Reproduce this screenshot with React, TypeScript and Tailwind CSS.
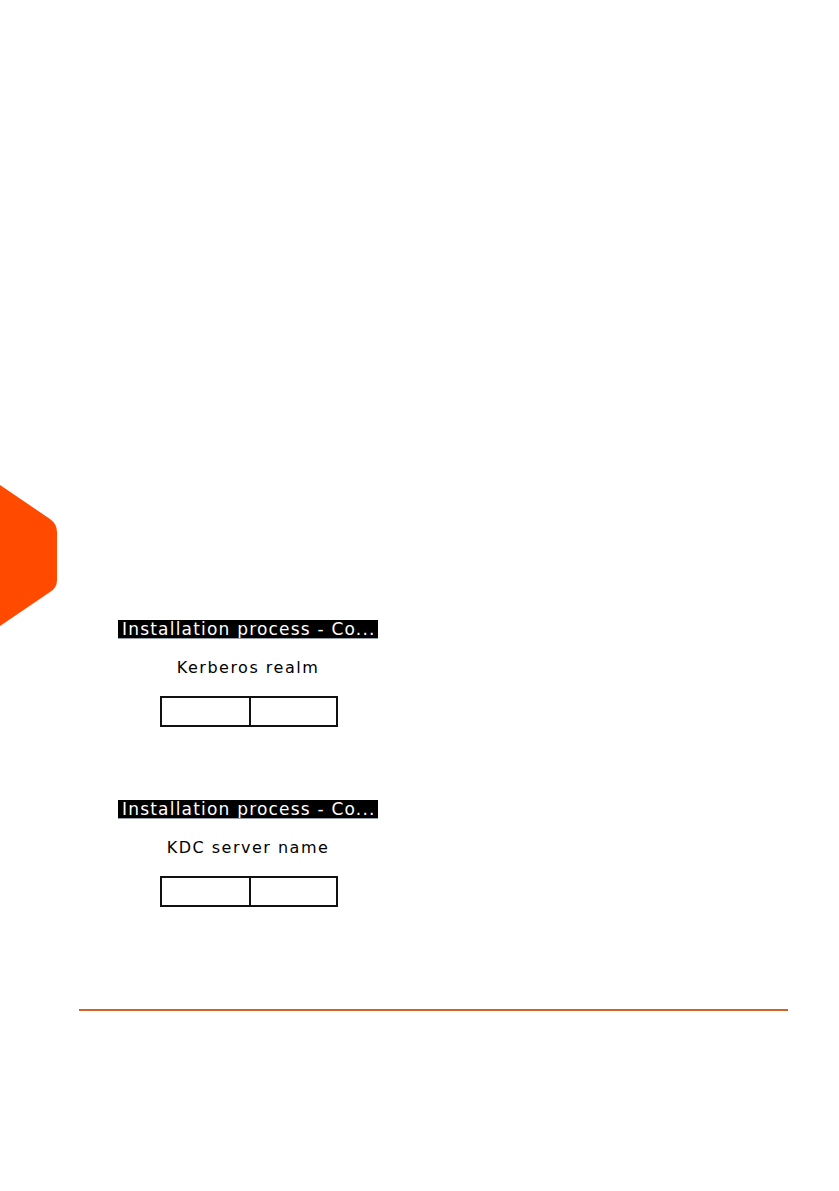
const Screen = ({ label }: { label: string }) => (
  <div className="ml-[118px] w-[260px]">
    <div className="h-[18px] bg-black text-white text-[17px] leading-[18px] tracking-[1.2px] pl-[4px] whitespace-nowrap overflow-hidden font-['DejaVu_Sans',sans-serif]">
      Installation process - Co...
    </div>
    <div className="h-px bg-gray-400" />
    <div className="mt-[19px] h-[20px] text-center text-[16px] leading-[20px] text-black tracking-[1.5px] font-['DejaVu_Sans',sans-serif]">
      {label}
    </div>
    <div className="mt-[18px] ml-[42px] flex h-[31px] w-[178px] border-2 border-[#111]">
      <div className="w-[89px] border-r-2 border-[#111]" />
      <div className="flex-1" />
    </div>
  </div>
);

export default function App() {
  return (
    <div className="relative h-[1191px] w-[839px] overflow-hidden bg-white">
      <svg className="absolute left-0 top-[480px]" width="60" height="150" viewBox="0 0 60 150">
        <path
          d="M0 5 L50 39 Q57 44 57 52 L57 100 Q57 108 50 112 L0 146 Z"
          fill="#ff4a00"
        />
      </svg>
      <div className="pt-[620px]">
        <Screen label="Kerberos realm" />
        <div className="h-[73px]" />
        <Screen label="KDC server name" />
        <div className="ml-[79px] mt-[102px] h-[2px] w-[709px] bg-[#d0632a]" />
      </div>
    </div>
  );
}
